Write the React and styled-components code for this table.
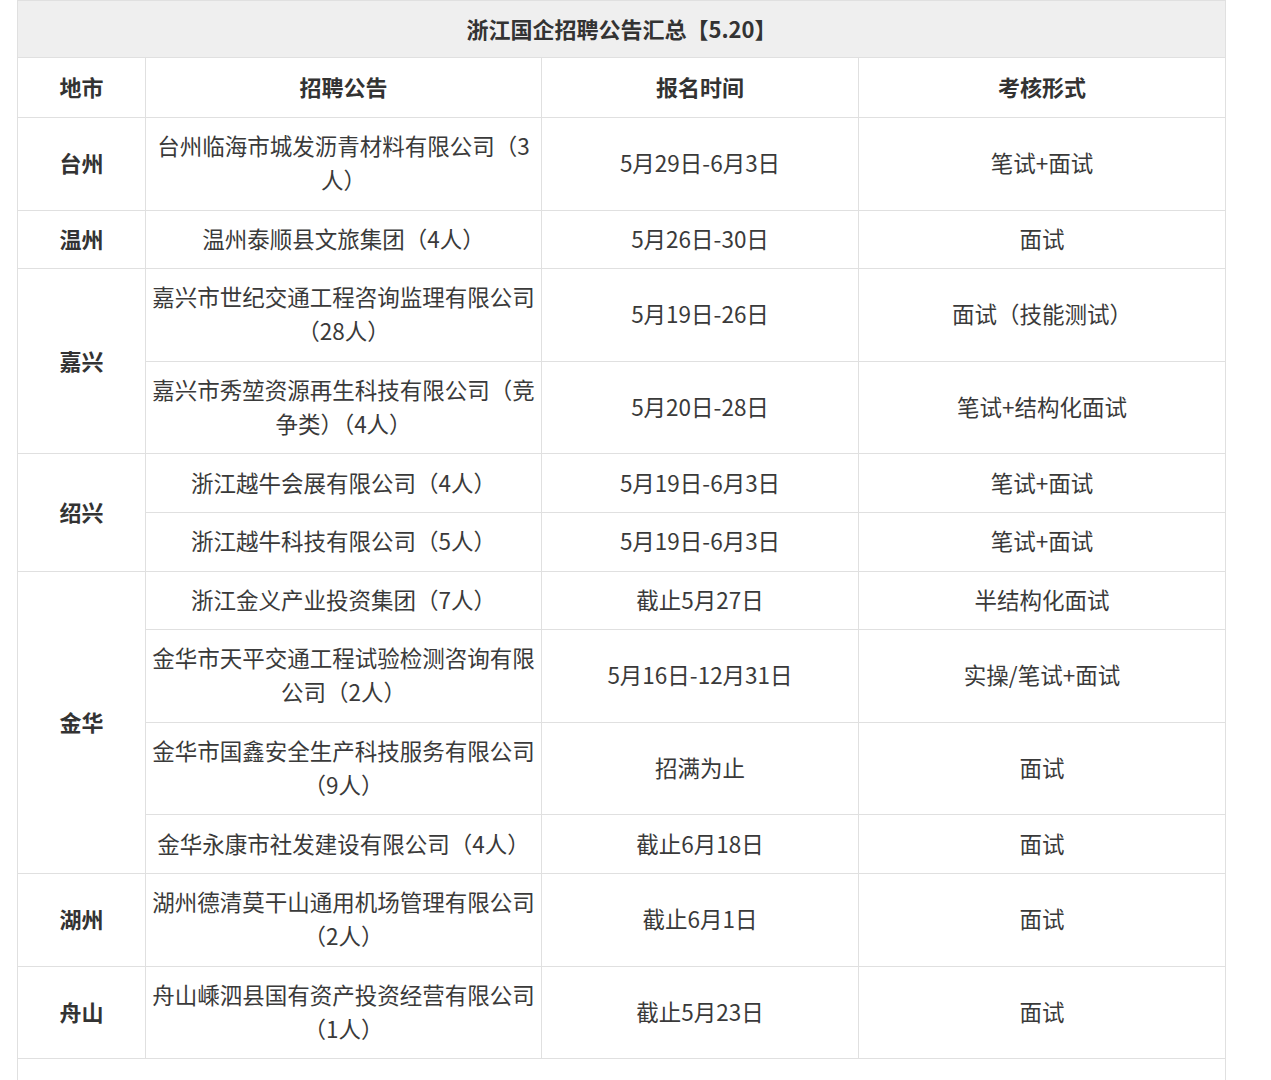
import React from "react";
import styled, { createGlobalStyle } from "styled-components";

const Global = createGlobalStyle`
  html, body { margin: 0; padding: 0; background: #fff; }
  body {
    font-family: "Noto Sans CJK SC", "Noto Sans", sans-serif;
    color: #333;
  }
`;

const Page = styled.div`
  padding: 0 46px 0 17px;
`;

const Table = styled.table`
  width: 1208px;
  border-collapse: collapse;
  table-layout: fixed;
  font-size: 22.5px;
  line-height: 34px;
  color: #3a3a3a;
`;

const TitleCell = styled.th`
  background: #efefef;
  border: 1px solid #e0e0e0;
  padding: 9.5px 12px 12.5px;
  font-weight: 700;
  font-size: 22px;
  text-align: center;
  color: #333;
`;

const HeadCell = styled.th`
  border: 1px solid #e0e0e0;
  padding: 11px 5px 14px;
  font-weight: 700;
  font-size: 22px;
  text-align: center;
  color: #333;
`;

const Cell = styled.td`
  border: 1px solid #e0e0e0;
  padding: 10.3px 5px 13.3px;
  text-align: center;
  vertical-align: middle;
  font-weight: ${(p) => (p.$bold ? 700 : 400)};
  font-size: ${(p) => (p.$bold ? "22px" : "22.5px")};
  color: ${(p) => (p.$bold ? "#333" : "#3a3a3a")};
  white-space: nowrap;
`;

const FillerCell = styled.td`
  border: 1px solid #e0e0e0;
  height: 34px;
  padding: 12px 5px;
`;

const rows = [
  { city: "台州", span: 1, name: ["台州临海市城发沥青材料有限公司（3", "人）"], time: "5月29日-6月3日", form: "笔试+面试" },
  { city: "温州", span: 1, name: ["温州泰顺县文旅集团（4人）"], time: "5月26日-30日", form: "面试" },
  { city: "嘉兴", span: 2, name: ["嘉兴市世纪交通工程咨询监理有限公司", "（28人）"], time: "5月19日-26日", form: "面试（技能测试）" },
  { name: ["嘉兴市秀堃资源再生科技有限公司（竞", "争类）（4人）"], time: "5月20日-28日", form: "笔试+结构化面试" },
  { city: "绍兴", span: 2, name: ["浙江越牛会展有限公司（4人）"], time: "5月19日-6月3日", form: "笔试+面试" },
  { name: ["浙江越牛科技有限公司（5人）"], time: "5月19日-6月3日", form: "笔试+面试" },
  { city: "金华", span: 4, name: ["浙江金义产业投资集团（7人）"], time: "截止5月27日", form: "半结构化面试" },
  { name: ["金华市天平交通工程试验检测咨询有限", "公司（2人）"], time: "5月16日-12月31日", form: "实操/笔试+面试" },
  { name: ["金华市国鑫安全生产科技服务有限公司", "（9人）"], time: "招满为止", form: "面试" },
  { name: ["金华永康市社发建设有限公司（4人）"], time: "截止6月18日", form: "面试" },
  { city: "湖州", span: 1, name: ["湖州德清莫干山通用机场管理有限公司", "（2人）"], time: "截止6月1日", form: "面试" },
  { city: "舟山", span: 1, name: ["舟山嵊泗县国有资产投资经营有限公司", "（1人）"], time: "截止5月23日", form: "面试" },
];

export default function App() {
  return (
    <Page>
      <Global />
      <Table>
        <colgroup>
          <col style={{ width: "128px" }} />
          <col style={{ width: "396px" }} />
          <col style={{ width: "317px" }} />
          <col style={{ width: "367px" }} />
        </colgroup>
        <thead>
          <tr>
            <TitleCell colSpan={4}>浙江国企招聘公告汇总【5.20】</TitleCell>
          </tr>
          <tr>
            <HeadCell>地市</HeadCell>
            <HeadCell>招聘公告</HeadCell>
            <HeadCell>报名时间</HeadCell>
            <HeadCell>考核形式</HeadCell>
          </tr>
        </thead>
        <tbody>
          {rows.map((r, i) => (
            <tr key={i}>
              {r.city && (
                <Cell $bold rowSpan={r.span}>
                  {r.city}
                </Cell>
              )}
              <Cell>
                {r.name.map((line, j) => (
                  <React.Fragment key={j}>
                    {j > 0 && <br />}
                    {line}
                  </React.Fragment>
                ))}
              </Cell>
              <Cell>{r.time}</Cell>
              <Cell>{r.form}</Cell>
            </tr>
          ))}
          <tr>
            <FillerCell colSpan={4} />
          </tr>
        </tbody>
      </Table>
    </Page>
  );
}
